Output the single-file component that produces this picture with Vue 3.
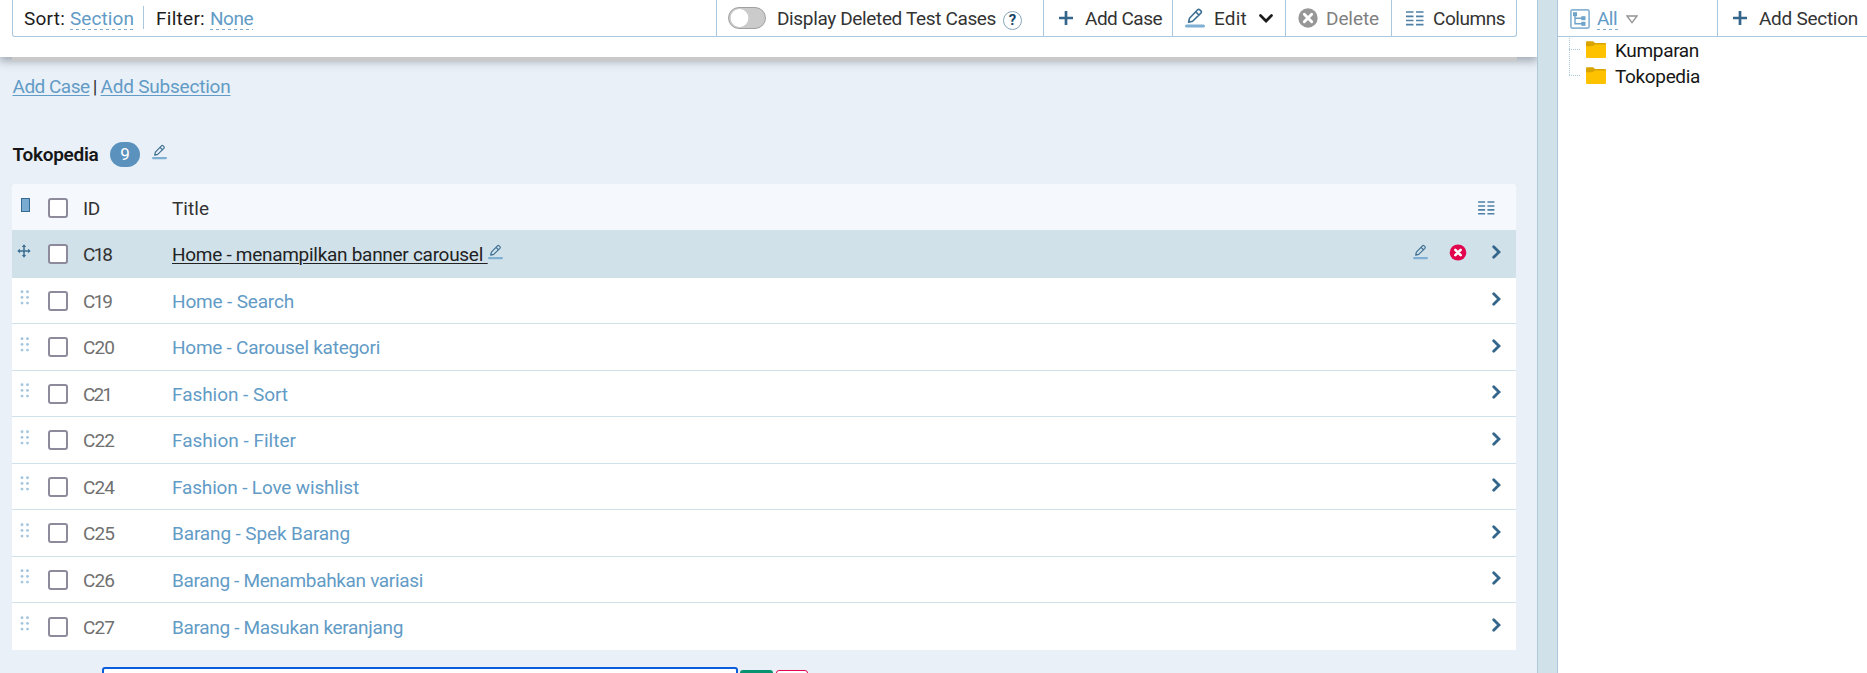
<script setup>
import { h } from 'vue'

const cases = [
  { id: 'C18', title: 'Home - menampilkan banner carousel', w: 311, active: true },
  { id: 'C19', title: 'Home - Search', w: 122 },
  { id: 'C20', title: 'Home - Carousel kategori', w: 208 },
  { id: 'C21', title: 'Fashion - Sort', w: 116 },
  { id: 'C22', title: 'Fashion - Filter', w: 124 },
  { id: 'C24', title: 'Fashion - Love wishlist', w: 187 },
  { id: 'C25', title: 'Barang - Spek Barang', w: 178 },
  { id: 'C26', title: 'Barang - Menambahkan variasi', w: 251 },
  { id: 'C27', title: 'Barang - Masukan keranjang', w: 231 },
]
const folders = [
  { name: 'Kumparan', w: 84 },
  { name: 'Tokopedia', w: 85 },
]

// Tracks a label so that it takes the given width.
const vFit = {
  mounted(el, { value }) {
    const natural = el.getBoundingClientRect().width
    el.style.letterSpacing = (value - natural) / el.textContent.trim().length + 'px'
  },
}

const Pencil = () =>
  h('svg', { viewBox: '0 0 20 20', fill: 'none' }, [
    h('path', { d: 'M3.6 14.2 4.5 10.2 12.6 1.8Q13.7 .8 14.8 1.8L15.9 2.9Q16.9 4 15.9 5.1L7.6 13.2ZM10.8 3.9 13.9 7', stroke: '#3d6f93', 'stroke-width': 1.6, 'stroke-linejoin': 'round' }),
    h('path', { d: 'M1.5 18H18.5', stroke: '#7fafd2', 'stroke-width': 3, 'stroke-linecap': 'round' }),
  ])
const Plus = () =>
  h('svg', { viewBox: '0 0 14 14' }, [
    h('path', { d: 'M7 .8V13.2M.8 7H13.2', stroke: '#33668a', 'stroke-width': 2.7, 'stroke-linecap': 'round' }),
  ])
const Columns = () =>
  h('svg', { viewBox: '0 0 18 15' }, [
    h('path', { d: 'M0 1H7.5M10 1H17.5M0 5.3H7.5M10 5.3H17.5M0 9.5H7.5M10 9.5H17.5M0 13.7H7.5M10 13.7H17.5', stroke: '#4f80a5', 'stroke-width': 1.7 }),
  ])
</script>

<template>
  <div class="page">
    <main class="main">
      <header class="top">
        <div class="bar">
          <div class="filters">
            <span v-fit="41">Sort:</span>
            <a class="dotted section"><span v-fit="64">Section</span></a>
            <i class="sep"></i>
            <span v-fit="49">Filter:</span>
            <a class="dotted none"><span v-fit="43">None</span></a>
          </div>
          <div class="seg deleted">
            <i class="toggle"></i>
            <span v-fit="219">Display Deleted Test Cases</span>
            <i class="help">?</i>
          </div>
          <div class="seg add"><Plus class="plus" /><span v-fit="77">Add Case</span></div>
          <div class="seg edit">
            <Pencil class="pen" /><span v-fit="33">Edit</span>
            <svg class="down" viewBox="0 0 14 9"><path d="M1.5 1.5 7 7 12.5 1.5" fill="none" stroke="#1c1c1c" stroke-width="2.7" stroke-linecap="round" /></svg>
          </div>
          <div class="seg del">
            <svg class="x" viewBox="0 0 20 20"><circle cx="10" cy="10" r="9.7" fill="#979797" /><path d="M6.3 6.3 13.7 13.7M13.7 6.3 6.3 13.7" stroke="#fff" stroke-width="2.9" stroke-linecap="round" /></svg>
            <span v-fit="53">Delete</span>
          </div>
          <div class="seg cols"><Columns class="colicon" /><span v-fit="72">Columns</span></div>
        </div>
        <i class="strip"></i>
      </header>

      <div class="links">
        <a v-fit="77">Add Case</a><span class="pipe">|</span><a v-fit="130">Add Subsection</a>
      </div>

      <div class="heading">
        <b v-fit="86">Tokopedia</b><span class="badge">9</span><Pencil class="pen-s" />
      </div>

      <section class="table">
        <div class="row head">
          <i class="gutter"><i class="marker"></i></i>
          <i class="check"></i>
          <span class="id"><span v-fit="17">ID</span></span>
          <span class="title"><span v-fit="37">Title</span></span>
          <Columns class="headcols" />
        </div>
        <div v-for="c in cases" :key="c.id" class="row" :class="{ active: c.active }">
          <i class="gutter">
            <svg v-if="c.active" class="move" viewBox="0 0 14 14"><path d="M7 2V12M2 7H12" stroke="#3b6d91" stroke-width="1.5" /><path d="M7 .3 9.2 3H4.8ZM7 13.7 4.8 11H9.2ZM.3 7 3 4.8V9.2ZM13.7 7 11 9.2V4.8Z" fill="#3b6d91" /></svg>
            <svg v-else class="grip" viewBox="0 0 10 15"><g fill="#a5c6df"><circle v-for="n in 6" :key="n" :cx="n % 2 ? 2 : 7.5" :cy="1.7 + Math.floor((n - 1) / 2) * 5.7" r="1.45" /></g></svg>
          </i>
          <i class="check"></i>
          <span class="id"><span v-fit="c.id === 'C19' || c.id === 'C18' || c.id === 'C21' ? 28 : 31">{{ c.id }}</span></span>
          <span class="title"><a v-fit="c.w">{{ c.title }}</a><span v-if="c.active" class="gap">&nbsp;</span><Pencil v-if="c.active" class="pen-s" /></span>
          <template v-if="c.active">
            <Pencil class="pen-s act" />
            <svg class="remove" viewBox="0 0 18 18"><ellipse cx="9" cy="9" rx="8.8" ry="8.5" fill="#e2064e" /><path d="M6.2 6.2 11.8 11.8M11.8 6.2 6.2 11.8" stroke="#fff" stroke-width="2.8" stroke-linecap="round" /></svg>
          </template>
          <svg class="go" viewBox="0 0 9 14"><path d="M1.7 1.7 7 7 1.7 12.3" fill="none" stroke="#33668a" stroke-width="2.8" stroke-linecap="round" /></svg>
        </div>
      </section>

      <div class="form"><i class="input"></i><i class="ok"></i><i class="cancel"></i></div>
    </main>

    <div class="splitter"></div>

    <aside class="side">
      <div class="sidebar">
        <div class="all">
          <svg class="tree" viewBox="0 0 20 20"><rect x=".9" y=".9" width="18.2" height="18.2" rx="1.5" fill="none" stroke="#8cb5d5" stroke-width="1.7" /><g fill="#6fa3c9"><rect x="3" y="3.2" width="4" height="4" /><rect x="11.3" y="7.2" width="4.2" height="4" /><rect x="11.3" y="12.8" width="4.2" height="4" /></g><path d="M5 6V14.8H12M5 9.2H12" fill="none" stroke="#6fa3c9" stroke-width="1.4" /></svg>
          <a class="dotted allink"><span v-fit="20">All</span></a>
          <svg class="tri" viewBox="0 0 12 9"><path d="M1 1H11L6 7.6Z" fill="none" stroke="#929292" stroke-width="1.3" /></svg>
        </div>
        <div class="addsec"><Plus class="plus" /><span v-fit="99">Add Section</span></div>
      </div>
      <div v-for="f in folders" :key="f.name" class="node">
        <i class="branch"></i>
        <svg class="folder" viewBox="0 0 20 17"><path d="M0 1.2Q0 .2 1 .2H7L9 2H19Q20 2 20 3V8H0Z" fill="#d9a300" /><path d="M0 5.3H6.5L9 3.6H20V16Q20 17 19 17H1Q0 17 0 16Z" fill="#fec200" /></svg>
        <span v-fit="f.w">{{ f.name }}</span>
      </div>
    </aside>
  </div>
</template>

<style>
html, body { overflow: hidden; }
</style>

<style scoped>
* { box-sizing: border-box; }
.page { display: flex; height: 673px; overflow: hidden; font: 400 19px/24px Roboto, "Liberation Sans", sans-serif; color: #333; white-space: nowrap; }
i { font-style: normal; flex: none; }
svg { display: block; flex: none; }
a { display: inline-block; }
.main { width: 1537px; flex: none; background: #e9f0f7; }
.top { position: relative; height: 57px; background: #fff; padding: 0 20px 0 12px; box-shadow: 0 3px 9px 1px rgba(70, 75, 90, .45); clip-path: inset(0 0 -20px 0); }
.strip { position: absolute; left: 12px; right: 20px; top: 57px; height: 4px; background: #c9c9c9; }
.bar { display: flex; height: 37px; border: 1px solid #a9c8dd; border-top: 0; border-radius: 0 0 3px 3px; }
.filters { display: flex; flex: 1; padding-left: 11px; color: #1c1c1c; line-height: 37px; }
.dotted { color: #629bc6; height: 30px; background: repeating-linear-gradient(90deg, #7facce 0 3px, transparent 3px 6px) left bottom / 100% 1px no-repeat; }
.section { width: 64px; margin-left: 5px; }
.none { width: 43px; margin-left: 5px; }
.sep { width: 1px; height: 23px; margin: 6px 12px 0 9px; background: #a9c8dd; }
.seg { display: flex; align-items: center; height: 36px; border-left: 1px solid #a9c8dd; }
.seg span, .addsec span { padding-top: 1px; }
.deleted { width: 327px; padding-left: 11px; }
.toggle { width: 38px; height: 22px; margin-right: 11px; border: 1.5px solid #a0a0a0; border-radius: 11px; background: radial-gradient(circle at 10.5px 50%, #fff 8.5px, #cbcbcb 9.2px); }
.help { width: 19px; height: 19px; margin: 5px 0 0 7px; border: 1px solid #88a5ba; border-radius: 50%; color: #174769; font-size: 15px; font-weight: 700; line-height: 17px; text-align: center; }
.add { width: 129px; padding-left: 15px; }
.plus { width: 14px; height: 14px; margin-right: 12px; }
.edit { width: 113px; padding-left: 12px; }
.pen { width: 20px; height: 20px; margin-right: 9px; }
.down { width: 14px; height: 9px; margin-left: 12px; }
.del { width: 106px; padding-left: 12px; color: #808080; }
.x { width: 20px; height: 20px; margin-right: 8px; }
.cols { width: 125px; padding-left: 14px; }
.colicon { width: 18px; height: 15px; margin-right: 9px; }
.links { display: flex; height: 58px; padding: 18px 0 0 12.5px; }
.links a { color: #629bc6; text-decoration: underline; text-decoration-thickness: 1px; text-underline-offset: 2px; }
.pipe { width: 11px; text-align: center; }
.heading { display: flex; height: 69px; padding: 26px 0 0 12.5px; color: #161616; }
.heading b { font-weight: 600; line-height: 27px; }
.badge { width: 30px; height: 25px; margin: 1px 12px 0 11.5px; border-radius: 12.5px; background: #5a92bd; color: #fff; font-size: 17px; line-height: 25px; text-align: center; }
.pen-s { width: 15px; height: 16px; }
.heading .pen-s { margin-top: 3px; }
.table { width: 1504px; margin-left: 12px; border-radius: 4px 4px 0 0; overflow: hidden; background: #fff; }
.row { display: flex; align-items: center; height: 46.5px; padding-right: 15px; border-bottom: 1px solid #d1e1ea; }
.row:last-child { border-bottom: 0; }
.row.head { height: 46px; border-bottom: 0; background: #f5f8fd; }
.row.active { height: 47.5px; background: #d1e1ea; }
.gutter { display: flex; width: 36px; padding: 0 0 5px 8px; }
.marker { width: 9px; height: 14px; margin-left: .5px; background: #7aabd0; border: 1px solid #356b92; }
.grip { width: 10px; height: 15px; }
.move { width: 14px; height: 14px; margin-left: -3px; }
.check { width: 20px; height: 20px; margin-top: 1px; border: 2px solid #8d8b9b; border-radius: 3px; background: #fff; }
.id { width: 89px; margin-left: 15px; padding-top: 3px; color: #707070; }
.title { display: flex; flex: 1; padding-top: 3px; }
.title a { color: #629bc6; }
.head .id, .active .id { color: #333; }
.active .title a { color: #222; }
.active .title a, .gap { text-decoration: underline; text-decoration-thickness: 1px; text-underline-offset: 2px; }
.gap { width: 5px; overflow: hidden; color: #222; }
.title .pen-s { margin-top: 1px; }
.headcols { width: 17px; height: 14px; margin: 2px 6px 0 0; }
.act { margin: 0 21px 3px 0; }
.remove { width: 18px; height: 17px; margin: 0 25px 2px 0; }
.go { width: 9px; height: 14px; margin-bottom: 2px; }
.form { display: flex; height: 6px; margin: 17px 0 0 102px; overflow: hidden; }
.input { width: 636px; height: 30px; border: 2px solid #0b5edb; border-radius: 3px; background: #fff; }
.ok { width: 33px; height: 30px; margin: 3px 3px 0 2px; border-radius: 3px; background: #07936f; }
.cancel { width: 32px; height: 30px; margin-top: 3px; border: 1px solid #e2064e; border-radius: 3px; background: #fff; }
.splitter { width: 21px; flex: none; border: solid #adc8dc; border-width: 0 1px; background: #d1e1ea; }
.side { flex: 1; background: #fff; color: #161616; }
.sidebar { display: flex; height: 37px; margin-bottom: 1px; border-bottom: 1px solid #a9c8dd; color: #333; }
.all { display: flex; width: 159px; padding: 0 0 0 12px; line-height: 37px; }
.tree { width: 20px; height: 20px; margin: 9px 7px 0 0; }
.allink { width: 21px; }
.tri { width: 12px; height: 9px; margin: 15px 0 0 8px; }
.addsec { display: flex; flex: 1; align-items: center; padding-left: 15px; border-left: 1px solid #a9c8dd; }
.node { display: flex; align-items: center; height: 26px; padding-left: 11px; }
.branch { width: 11px; height: 26px; margin-right: 6px; background: repeating-linear-gradient(90deg, #a9c8dd 0 1px, transparent 1px 2px) left 11px / 11px 1px no-repeat, repeating-linear-gradient(180deg, #a9c8dd 0 1px, transparent 1px 2px) left top / 1px 100% no-repeat; }
.node:last-child .branch { background-size: 11px 1px, 1px 12px; }
.folder { width: 20px; height: 17px; margin: 0 9px 3px 0; }
</style>
